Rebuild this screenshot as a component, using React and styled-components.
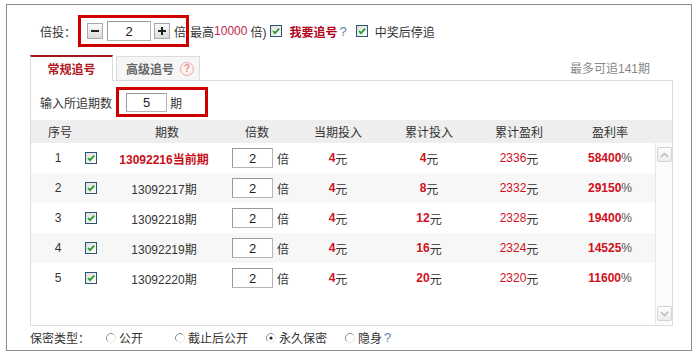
import React from "react";
import styled, { createGlobalStyle } from "styled-components";

const GlobalStyle = createGlobalStyle`
  html, body {
    margin: 0;
    padding: 0;
    background: #fff;
  }
  body {
    font-family: "Liberation Sans", Arial, "Noto Sans CJK SC", sans-serif;
    font-size: 12px;
    color: #333;
  }
`;

const Frame = styled.div`
  box-sizing: border-box;
  width: 686px;
  height: 347px;
  margin: 4px 0 0 6px;
  border: 1px solid #8c8c8c;
  padding: 10px 18px 0 23px;
  display: flex;
  flex-direction: column;
`;

const TopBar = styled.div`
  display: flex;
  align-items: center;
  height: 32px;
  padding-left: 10px;
  white-space: nowrap;
`;

const RedBox = styled.div`
  box-sizing: border-box;
  display: flex;
  align-items: center;
  width: ${(p) => p.$w}px;
  height: ${(p) => p.$h}px;
  margin-left: ${(p) => p.$ml || 0}px;
  padding-left: ${(p) => p.$pl || 0}px;
  border: 3px solid #cc0000;
`;

const StepBtn = styled.span`
  box-sizing: border-box;
  display: inline-flex;
  align-items: center;
  justify-content: center;
  width: 16px;
  height: 16px;
  border: 1px solid #a9a9a9;
  background: linear-gradient(#fbfbfb, #dcdcdc);
  margin-left: ${(p) => p.$ml || 0}px;
`;

const NumInput = styled.span`
  box-sizing: border-box;
  display: inline-flex;
  align-items: center;
  justify-content: center;
  width: ${(p) => p.$w}px;
  height: ${(p) => p.$h}px;
  margin-left: ${(p) => p.$ml || 0}px;
  border: 1px solid #b5b5b5;
  border-top-color: #9a9a9a;
  border-left-color: #9a9a9a;
  background: #fff;
  font-size: 13px;
  color: #222;
`;

const Txt = styled.span`
  margin-left: ${(p) => p.$ml || 0}px;
  color: ${(p) => p.$c || "inherit"};
  font-weight: ${(p) => (p.$b ? "bold" : "normal")};
  font-size: ${(p) => p.$fs || 12}px;
`;

const Help = styled.span`
  margin-left: 2px;
  color: #5b7fa6;
  font-size: 13px;
`;

const TabRow = styled.div`
  display: flex;
  align-items: flex-end;
  height: 25px;
  margin-top: 8px;
  position: relative;
  z-index: 1;
`;

const Tab = styled.div`
  box-sizing: border-box;
  display: flex;
  align-items: center;
  justify-content: ${(p) => (p.$active ? "center" : "flex-start")};
  width: ${(p) => (p.$active ? 83 : 84)}px;
  height: ${(p) => (p.$active ? 26 : 24)}px;
  margin-left: ${(p) => (p.$active ? 0 : 3)}px;
  margin-bottom: ${(p) => (p.$active ? -1 : 0)}px;
  padding-left: ${(p) => (p.$active ? 0 : 9)}px;
  border: 1px solid #dcdcdc;
  border-top: ${(p) => (p.$active ? "2px solid #a3181c" : "1px solid #dcdcdc")};
  border-bottom: ${(p) => (p.$active ? "1px solid #fff" : "none")};
  background: ${(p) => (p.$active ? "#fff" : "#f6f6f6")};
  color: ${(p) => (p.$active ? "#b0181e" : "#666")};
  font-weight: bold;
  font-size: 12px;
`;

const TabHelp = styled.span`
  box-sizing: border-box;
  display: inline-flex;
  align-items: center;
  justify-content: center;
  width: 14px;
  height: 14px;
  margin-left: 6px;
  border: 1px solid #f2a3a3;
  border-radius: 50%;
  background: #fff4f4;
  color: #ef8a8a;
  font-size: 10px;
  font-weight: bold;
`;

const MaxNote = styled.span`
  margin-left: auto;
  margin-right: 23px;
  align-self: center;
  color: #888;
  font-size: 12px;
`;

const Panel = styled.div`
  box-sizing: border-box;
  height: 246px;
  border: 1px solid #dcdcdc;
  display: flex;
  flex-direction: column;
`;

const InputRow = styled.div`
  display: flex;
  align-items: center;
  height: 39px;
  padding: 3px 0 0 9px;
  box-sizing: border-box;
`;

const HeadRow = styled.div`
  display: grid;
  grid-template-columns: 58px 156px 46px 94px 88px 92px 90px;
  align-items: center;
  height: 23px;
  background: #eeeeee;
  text-align: center;
  font-size: 12px;
  color: #333;
`;

const HeadCell = styled.div`
  text-align: ${(p) => (p.$left ? "left" : "center")};
`;

const Body = styled.div`
  display: flex;
  height: 181px;
`;

const Rows = styled.div`
  width: 624px;
`;

const Row = styled.div`
  display: grid;
  grid-template-columns: 54px 12px 134px 60px 94px 88px 92px 90px;
  align-items: center;
  height: 30px;
  background: ${(p) => (p.$alt ? "#f7f7f7" : "#fff")};
  text-align: center;
`;

const Cell = styled.div`
  display: flex;
  align-items: center;
  justify-content: ${(p) => (p.$start ? "flex-start" : "center")};
  padding-left: ${(p) => p.$pl || 0}px;
  color: ${(p) => p.$c || "#333"};
  font-weight: ${(p) => (p.$b ? "bold" : "normal")};
  font-size: 12px;
`;

const Red = styled.span`
  color: #d0101c;
  font-weight: ${(p) => (p.$b ? "bold" : "normal")};
`;

const Unit = styled.span`
  color: ${(p) => p.$c || "#333"};
`;

const Scroll = styled.div`
  box-sizing: border-box;
  width: 17px;
  display: flex;
  flex-direction: column;
  justify-content: space-between;
  align-items: center;
  padding: 4px 0 3px;
  border-left: 1px solid #e6e6e6;
  background: #fbfbfb;
`;

const ScrollBtn = styled.span`
  box-sizing: border-box;
  display: flex;
  align-items: center;
  justify-content: center;
  width: 15px;
  height: 15px;
  border: 1px solid #d4d4d4;
  border-radius: 2px;
  background: linear-gradient(#fdfdfd, #ececec);
`;

const BottomRow = styled.div`
  display: flex;
  align-items: center;
  flex: 1;
  padding-bottom: 1px;
  white-space: nowrap;
`;

const Option = styled.span`
  display: inline-flex;
  align-items: center;
  margin-left: ${(p) => p.$ml}px;
`;

const CheckBox = ({ ml = 0 }) => (
  <svg width="12" height="12" viewBox="0 0 12 12" style={{ marginLeft: ml, flex: "none" }}>
    <defs>
      <linearGradient id="cbg" x1="0" y1="0" x2="1" y2="1">
        <stop offset="0" stopColor="#dcdcdc" />
        <stop offset="1" stopColor="#ffffff" />
      </linearGradient>
    </defs>
    <rect x="0.5" y="0.5" width="11" height="11" fill="url(#cbg)" stroke="#2b5573" />
    <path d="M3 6 L5 8.2 L9.2 3.6" fill="none" stroke="#22a02a" strokeWidth="1.8" />
  </svg>
);

const Radio = ({ checked }) => (
  <svg width="12" height="12" viewBox="0 0 12 12" style={{ flex: "none" }}>
    <circle cx="6" cy="6" r="4.5" fill="#fff" />
    <path d="M2.82 9.18 A4.5 4.5 0 0 1 9.18 2.82" fill="none" stroke="#8f8f8f" strokeWidth="1" />
    <path d="M9.18 2.82 A4.5 4.5 0 0 1 2.82 9.18" fill="none" stroke="#e6e6e6" strokeWidth="1" />
    {checked && <circle cx="6" cy="6" r="1.6" fill="#222" />}
  </svg>
);

const Chevron = ({ up }) => (
  <svg width="9" height="6" viewBox="0 0 9 6">
    <path d={up ? "M1 5 L4.5 1.5 L8 5" : "M1 1 L4.5 4.5 L8 1"} fill="none" stroke="#b9b9b9" strokeWidth="1.5" />
  </svg>
);

const rows = [
  { n: 1, period: "13092216", cur: true, total: 4, profit: 2336, rate: 58400 },
  { n: 2, period: "13092217", total: 8, profit: 2332, rate: 29150 },
  { n: 3, period: "13092218", total: 12, profit: 2328, rate: 19400 },
  { n: 4, period: "13092219", total: 16, profit: 2324, rate: 14525 },
  { n: 5, period: "13092220", total: 20, profit: 2320, rate: 11600 },
];

export default function App() {
  return (
    <>
      <GlobalStyle />
      <Frame>
        <TopBar>
          <Txt>倍投：</Txt>
          <RedBox $w={111} $h={32} $ml={2} $pl={6}>
            <StepBtn>
              <svg width="8" height="8" viewBox="0 0 8 8">
                <rect x="0" y="3" width="8" height="2" fill="#222" />
              </svg>
            </StepBtn>
            <NumInput $w={44} $h={20} $ml={4}>2</NumInput>
            <StepBtn $ml={3}>
              <svg width="8" height="8" viewBox="0 0 8 8">
                <rect x="0" y="3" width="8" height="2" fill="#222" />
                <rect x="3" y="0" width="2" height="8" fill="#222" />
              </svg>
            </StepBtn>
            <Txt $ml={4}>倍</Txt>
          </RedBox>
          <Txt $ml={1}>最高</Txt>
          <Txt $c="#c0284a">10000</Txt>
          <Txt $ml={3}>倍)</Txt>
          <CheckBox ml={4} />
          <Txt $ml={7} $c="#b5001a" $b>我要追号</Txt>
          <Help>?</Help>
          <CheckBox ml={9} />
          <Txt $ml={7}>中奖后停追</Txt>
        </TopBar>

        <TabRow>
          <Tab $active>常规追号</Tab>
          <Tab>
            高级追号<TabHelp>?</TabHelp>
          </Tab>
          <MaxNote>最多可追141期</MaxNote>
        </TabRow>

        <Panel>
          <InputRow>
            <Txt>输入所追期数</Txt>
            <RedBox $w={92} $h={30} $ml={4} $pl={7}>
              <NumInput $w={41} $h={19}>5</NumInput>
              <Txt $ml={3}>期</Txt>
            </RedBox>
          </InputRow>

          <HeadRow>
            <HeadCell>序号</HeadCell>
            <HeadCell>期数</HeadCell>
            <HeadCell $left>倍数</HeadCell>
            <HeadCell>当期投入</HeadCell>
            <HeadCell>累计投入</HeadCell>
            <HeadCell>累计盈利</HeadCell>
            <HeadCell>盈利率</HeadCell>
          </HeadRow>

          <Body>
            <Rows>
              {rows.map((r) => (
                <Row key={r.n} $alt={r.n % 2 === 0}>
                  <Cell>{r.n}</Cell>
                  <Cell>
                    <CheckBox />
                  </Cell>
                  <Cell $c={r.cur ? "#c8101a" : "#333"} $b={r.cur}>
                    {r.period}
                    {r.cur ? "当前期" : "期"}
                  </Cell>
                  <Cell $start $pl={1}>
                    <NumInput $w={41} $h={20}>2</NumInput>
                    <Txt $ml={4}>倍</Txt>
                  </Cell>
                  <Cell>
                    <Red $b>4</Red>
                    <Unit>元</Unit>
                  </Cell>
                  <Cell>
                    <Red $b>{r.total}</Red>
                    <Unit>元</Unit>
                  </Cell>
                  <Cell>
                    <Red>{r.profit}</Red>
                    <Unit>元</Unit>
                  </Cell>
                  <Cell>
                    <Red $b>{r.rate}</Red>
                    <Unit $c="#555">%</Unit>
                  </Cell>
                </Row>
              ))}
            </Rows>
            <Scroll>
              <ScrollBtn>
                <Chevron up />
              </ScrollBtn>
              <ScrollBtn>
                <Chevron />
              </ScrollBtn>
            </Scroll>
          </Body>
        </Panel>

        <BottomRow>
          <Txt>保密类型：</Txt>
          <Option $ml={15}>
            <Radio />
            <Txt $ml={2}>公开</Txt>
          </Option>
          <Option $ml={31}>
            <Radio />
            <Txt $ml={2}>截止后公开</Txt>
          </Option>
          <Option $ml={17}>
            <Radio checked />
            <Txt $ml={2}>永久保密</Txt>
          </Option>
          <Option $ml={17}>
            <Radio />
            <Txt $ml={2}>隐身</Txt>
            <Help>?</Help>
          </Option>
        </BottomRow>
      </Frame>
    </>
  );
}
